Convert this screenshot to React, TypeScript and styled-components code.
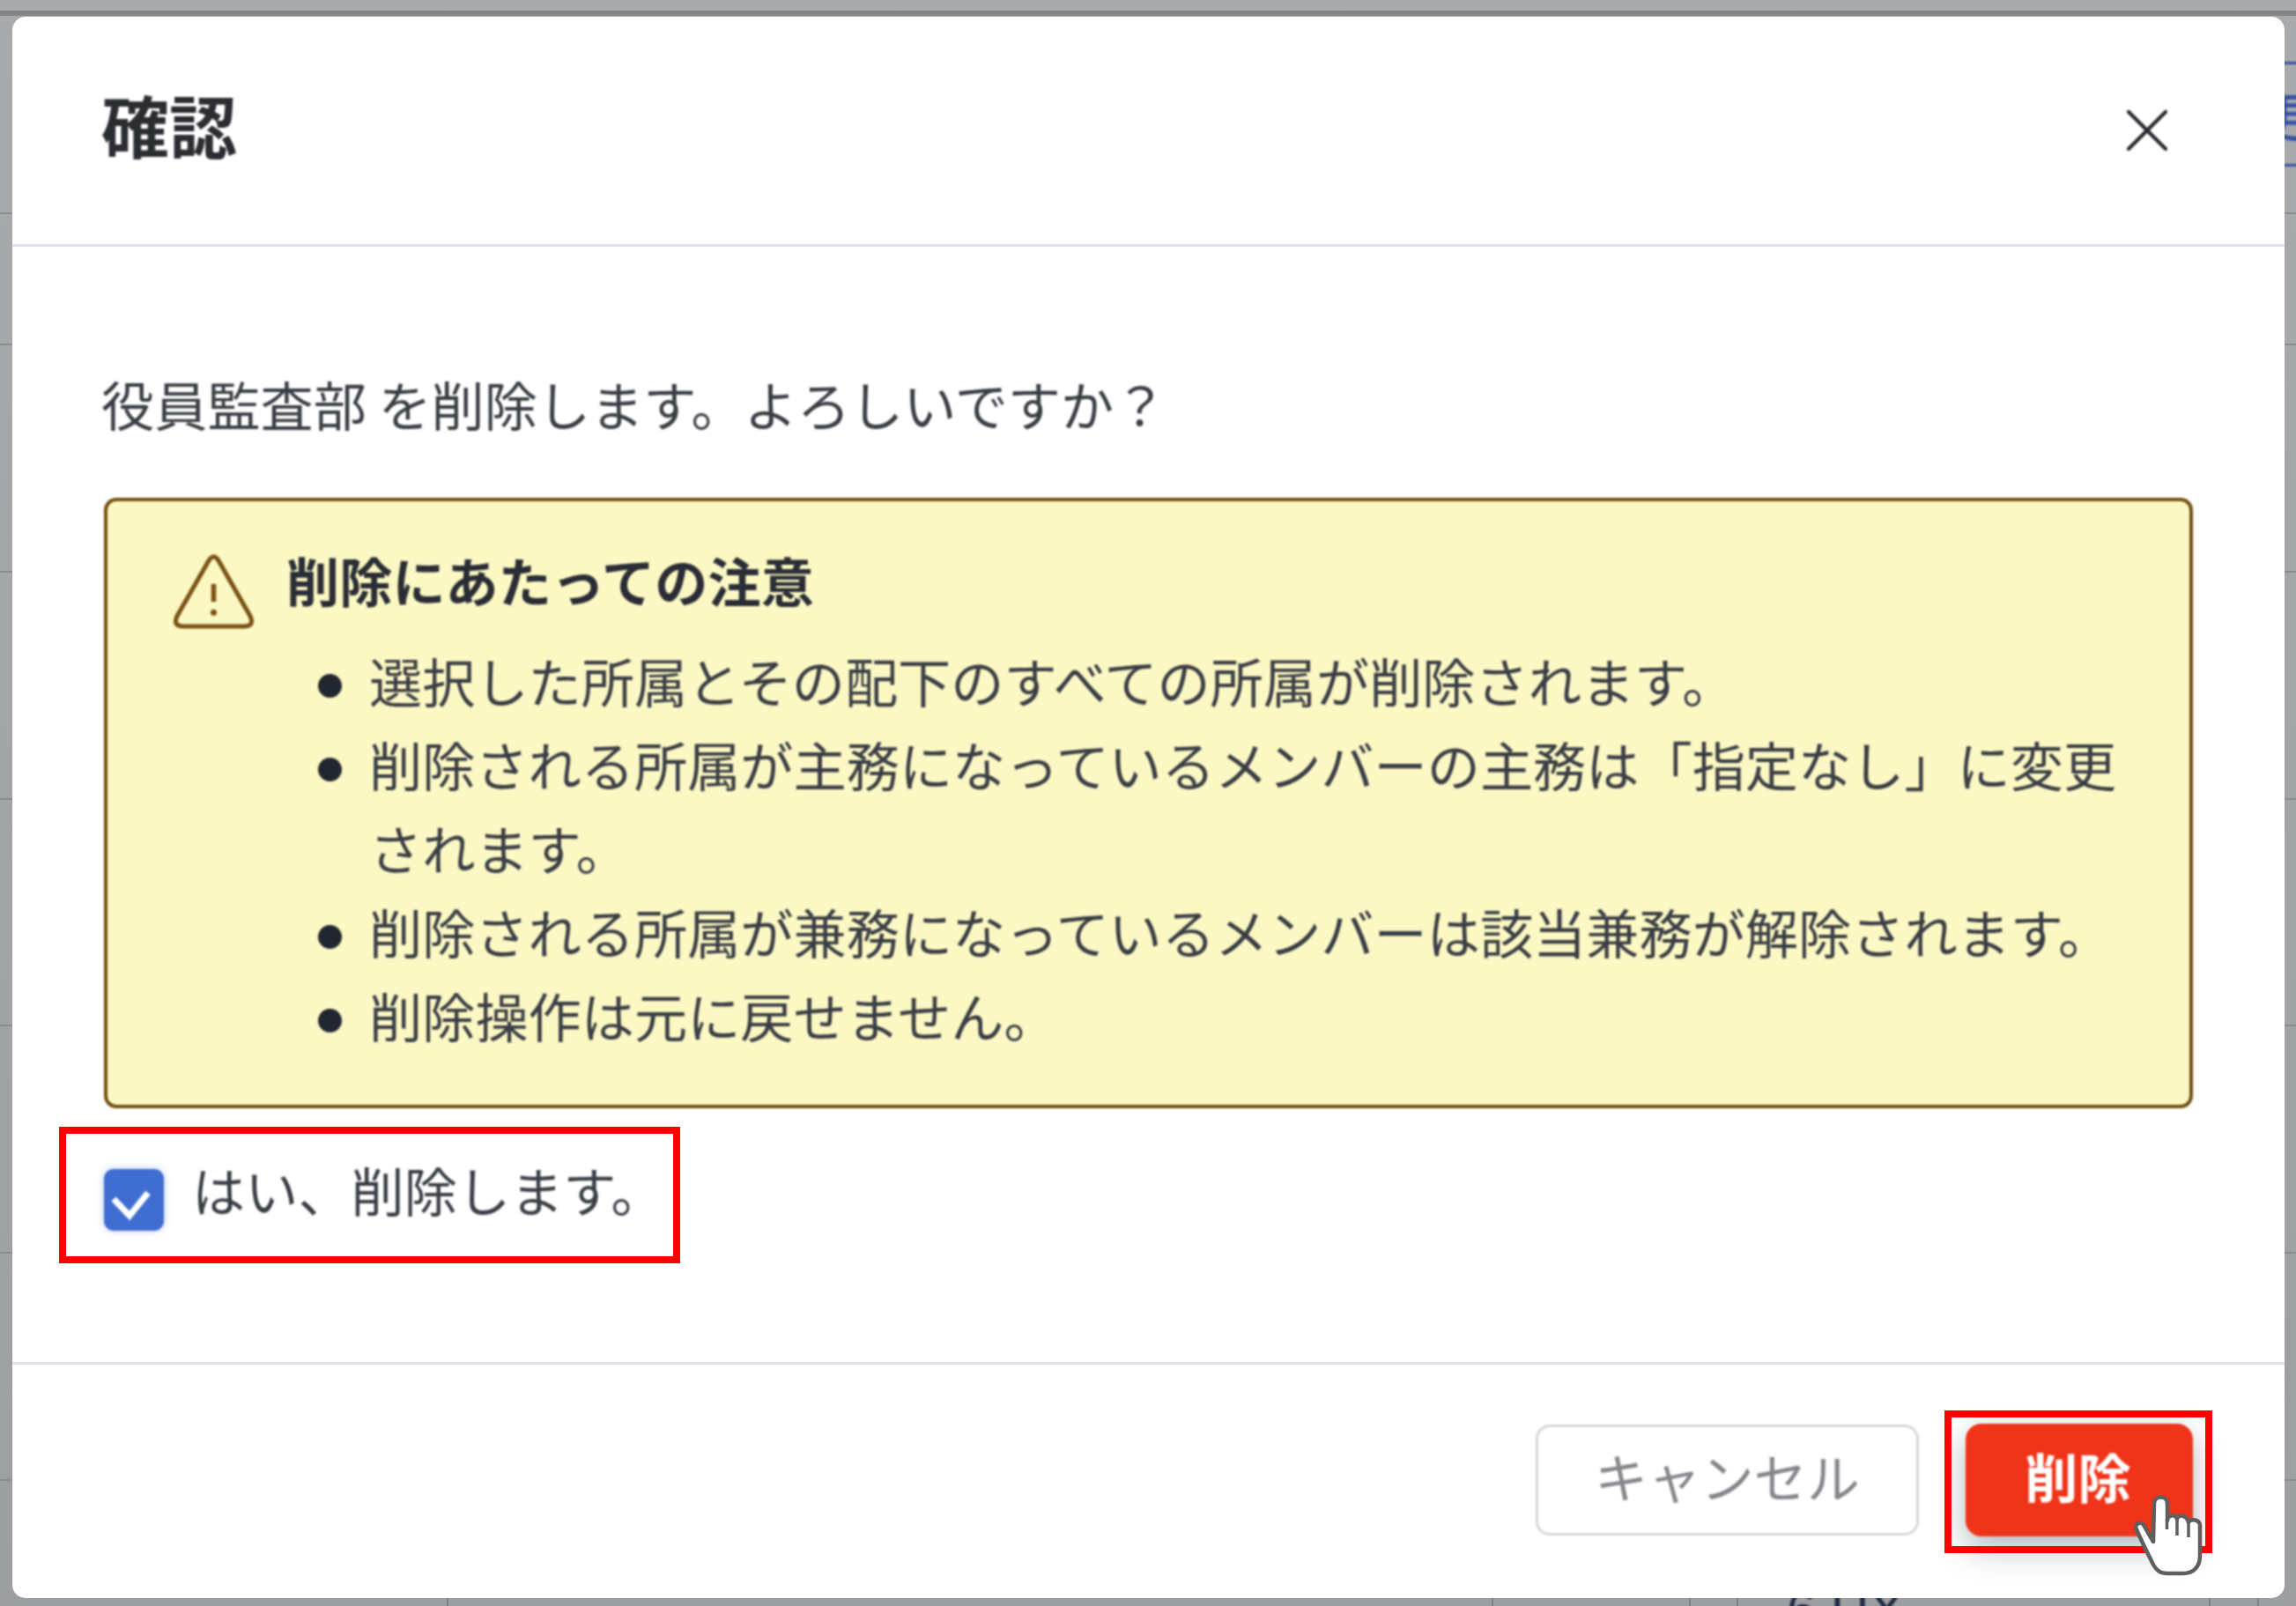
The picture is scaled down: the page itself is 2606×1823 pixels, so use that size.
import React from "react";
import styled, { createGlobalStyle, css } from "styled-components";

const Global = createGlobalStyle`
  html, body { margin: 0; padding: 0; }
  body { font-family: "Noto Sans CJK JP", "Noto Sans", sans-serif; }
  * { box-sizing: border-box; }
`;

const soft = css`
  filter: blur(1px);
`;

const line = "#8b8d90";
const hLine = (y: number) => `linear-gradient(${line},${line}) 0 ${y}px / 100% 2px no-repeat`;
const vLine = (x: number) => `linear-gradient(#7f8185,#7f8185) ${x}px 1800px / 2px 23px no-repeat`;

const Backdrop = styled.div`
  position: relative;
  width: 2606px;
  height: 1823px;
  overflow: hidden;
  padding: 19px 13px 9px 14px;
  background:
    linear-gradient(#7f8184, #85878a) 0 12px / 100% 6px no-repeat,
    ${hLine(241)}, ${hLine(390)}, ${hLine(648)}, ${hLine(906)}, ${hLine(1163)}, ${hLine(1421)}, ${hLine(1679)},
    ${vLine(507)}, ${vLine(1693)}, ${vLine(1917)}, ${vLine(1971)}, ${vLine(2507)}, ${vLine(2562)},
    linear-gradient(#a9aaac, #9d9ea1);
`;

const PageAction = styled.div`
  position: absolute;
  left: 2540px;
  top: 70px;
  width: 120px;
  height: 119px;
  border: solid #3554a5;
  border-width: 3px 0;
  color: #3554a5;
  font-size: 60px;
  font-weight: 500;
  line-height: 113px;
  padding-left: 22px;
  ${soft}
`;

const PageCell = styled.div`
  position: absolute;
  left: 2028px;
  top: 1793px;
  color: #1f2a44;
  font-family: "Liberation Sans", sans-serif;
  font-size: 60px;
  line-height: 70px;
  white-space: pre;
  ${soft}
`;

const Dialog = styled.div`
  position: relative;
  height: 100%;
  display: flex;
  flex-direction: column;
  background: #fff;
  border-radius: 15px;
`;

const Header = styled.header`
  flex: 0 0 261px;
  display: flex;
  align-items: center;
  justify-content: space-between;
  padding: 0 133px 6px 101px;
  border-bottom: 3px solid #dfe1e6;
`;

const Title = styled.h1`
  margin: -8px 0 0;
  font-size: 77px;
  line-height: 100px;
  font-weight: 700;
  color: #2b2d33;
  ${soft}
`;

const CloseIcon = styled.svg`
  display: block;
  width: 46px;
  height: 46px;
  margin-top: 6px;
  ${soft}
`;

const Body = styled.section`
  flex: 1;
  padding: 130px 104px 0 104px;
  color: #3a3d44;
  font-size: 60.2px;
  line-height: 95px;
`;

const Lead = styled.p`
  margin: 0 0 60px -3px;
  ${soft}
`;

const Notice = styled.div`
  height: 693px;
  display: flex;
  align-items: flex-start;
  gap: 37px;
  padding: 41px 55px 0 75px;
  background: #fbf8c4;
  border: 4px solid #74500f;
  border-radius: 14px;
  ${soft}
`;

const NoticeIcon = styled.svg`
  flex: none;
  width: 91px;
  height: 87px;
  margin-top: 18px;
`;

const NoticeContent = styled.div`
  flex: 1;
`;

const NoticeTitle = styled.div`
  font-weight: 700;
  color: #2a2d35;
`;

const NoticeList = styled.ul`
  list-style: none;
  margin: 19px 0 0 -2px;
  padding: 0 0 0 38px;
`;

const NoticeItem = styled.li`
  display: grid;
  grid-template-columns: 27px 1fr;
  column-gap: 31px;

  &::before {
    content: "";
    width: 27px;
    height: 27px;
    margin-top: 41px;
    border-radius: 50%;
    background: #22262f;
  }
`;

const ConfirmRow = styled.label`
  position: relative;
  display: flex;
  align-items: flex-start;
  gap: 32px;
  width: fit-content;
  margin-top: 44px;
`;

const CheckBox = styled.span`
  flex: none;
  display: block;
  width: 68px;
  height: 70px;
  margin-top: 25px;
  border-radius: 11px;
  background: #3f6dd1;
  box-shadow: 0 0 9px rgba(63, 109, 209, 0.35);
  ${soft}
`;

const CheckMark = styled.svg`
  display: block;
  width: 68px;
  height: 70px;
`;

const ConfirmText = styled.span`
  ${soft}
`;

const Highlight = styled.span<{ $left: number; $top: number; $width: number; $height: number }>`
  position: absolute;
  left: ${(p) => p.$left}px;
  top: ${(p) => p.$top}px;
  width: ${(p) => p.$width}px;
  height: ${(p) => p.$height}px;
  border: 8px solid #ff0000;
  pointer-events: none;
`;

const Footer = styled.footer`
  flex: 0 0 268px;
  display: flex;
  justify-content: flex-end;
  align-items: flex-start;
  gap: 53px;
  padding: 67px 104px 0 0;
  border-top: 3px solid #dfe1e6;
`;

const CancelButton = styled.button`
  width: 435px;
  height: 126px;
  margin-top: 1px;
  padding: 0 0 10px;
  background: #fff;
  border: 3px solid #d6d7db;
  border-radius: 16px;
  color: #85878c;
  font: 400 60.2px/1 "Noto Sans CJK JP", sans-serif;
  ${soft}
`;

const DeleteWrap = styled.div`
  position: relative;
`;

const DeleteButton = styled.button`
  display: block;
  width: 258px;
  height: 128px;
  padding: 0 3px 9px 0;
  background: #ef3419;
  border: none;
  border-radius: 18px;
  color: #fff;
  font: 700 60.2px/1 "Noto Sans CJK JP", sans-serif;
  box-shadow: 0 14px 36px rgba(45, 60, 70, 0.36);
  ${soft}
`;

const HandCursor = styled.svg`
  position: absolute;
  left: 189px;
  top: 80px;
  width: 80px;
  height: 94px;
`;

const items = [
  "選択した所属とその配下のすべての所属が削除されます。",
  "削除される所属が主務になっているメンバーの主務は「指定なし」に変更されます。",
  "削除される所属が兼務になっているメンバーは該当兼務が解除されます。",
  "削除操作は元に戻せません。",
];

export default function App() {
  return (
    <Backdrop>
      <Global />
      <PageAction>更</PageAction>
      <PageCell>6 UX</PageCell>
      <Dialog>
        <Header>
          <Title>確認</Title>
          <CloseIcon viewBox="0 0 46 46" aria-label="閉じる">
            <path d="M2 2 L44 44 M44 2 L2 44" stroke="#26282c" strokeWidth="4.2" strokeLinecap="round" />
          </CloseIcon>
        </Header>
        <Body>
          <Lead>役員監査部 を削除します。よろしいですか？</Lead>
          <Notice>
            <NoticeIcon viewBox="0 0 90 85">
              <path
                d="M40 7 Q45 0 50 7 L86 70 Q91 81 80 81.5 H10 Q-1 81 4 70 Z"
                fill="none"
                stroke="#7c5215"
                strokeWidth="5"
                strokeLinejoin="round"
              />
              <path d="M45 34 V54" stroke="#7c5215" strokeWidth="5.5" strokeLinecap="butt" />
              <circle cx="45" cy="66" r="3.5" fill="#7c5215" />
            </NoticeIcon>
            <NoticeContent>
              <NoticeTitle>削除にあたっての注意</NoticeTitle>
              <NoticeList>
                {items.map((t) => (
                  <NoticeItem key={t}>
                    <span>{t}</span>
                  </NoticeItem>
                ))}
              </NoticeList>
            </NoticeContent>
          </Notice>
          <ConfirmRow>
            <CheckBox>
              <CheckMark viewBox="0 0 68 70">
                <path d="M11 34 L29 53 L50 27" fill="none" stroke="#fff" strokeWidth="7" />
              </CheckMark>
            </CheckBox>
            <ConfirmText>はい、削除します。</ConfirmText>
            <Highlight $left={-51} $top={-23} $width={705} $height={155} />
          </ConfirmRow>
        </Body>
        <Footer>
          <CancelButton>キャンセル</CancelButton>
          <DeleteWrap>
            <DeleteButton>削除</DeleteButton>
            <Highlight $left={-24} $top={-15} $width={304} $height={162} />
            <HandCursor viewBox="-2 -2 80 94">
              <path
                d="M22 52 L11 33 C8 29 1 31 2.5 37 C8 50 16 66 22 78 C26 85 30 88 38 88 H56 C68 88 75 80 75 68 V34 C75 27 65 25 62 30 C60 22 51 20 49 26 C46 20 38 22 38 28 V9 C38 -1 23 -1 23 9 Z"
                fill="#fff"
                stroke="#5f5f5f"
                strokeWidth="4.5"
                strokeLinejoin="round"
              />
              <path d="M37.5 26 V38 M49 26 V45 M62 30 V47" fill="none" stroke="#5f5f5f" strokeWidth="3.5" />
            </HandCursor>
          </DeleteWrap>
        </Footer>
      </Dialog>
    </Backdrop>
  );
}
